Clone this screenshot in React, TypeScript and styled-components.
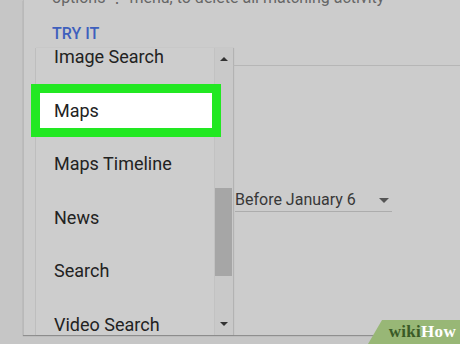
import { FunctionComponent } from "react"
import styled, { createGlobalStyle } from "styled-components"

const GlobalStyle = createGlobalStyle`
    html, body {
        margin: 0;
        padding: 0;
        overflow: hidden;
        background: #c6c6c6;
        font-family: Roboto, "Noto Sans", Arial, sans-serif;
    }
`

const Items = [
    'Image Search',
    'Maps',
    'Maps Timeline',
    'News',
    'Search',
    'Video Search',
]

const Page = styled.div`
    position: relative;
    display: flex;
    width: 460px;
    height: 344px;
    overflow: hidden;
    background: #c6c6c6;
`
const Gutter = styled.div`
    width: 23px;
    flex: none;
`
const Card = styled.div`
    flex: 1;
    height: 335px;
    display: flex;
    flex-direction: column;
    background: #cccccc;
    border-left: 1px solid #b9b9b9;
    box-shadow: 0 1px 1px rgba(0, 0, 0, 0.28);
`
const HintText = styled.div`
    margin-top: -12.5px;
    padding-left: 28px;
    font-size: 16px;
    line-height: 20px;
    color: #666;
    white-space: nowrap;
`
const TryIt = styled.div`
    margin-top: 16.5px;
    padding-left: 28px;
    font-size: 16px;
    line-height: 20px;
    font-weight: 500;
    color: #3e5fbd;
`
const Body = styled.div`
    flex: 1;
    display: flex;
    align-items: flex-start;
    margin-top: 4px;
    padding-left: 11px;
    min-height: 0;
`
const Menu = styled.div`
    width: 198px;
    height: 287px;
    flex: none;
    display: flex;
    background: #cdcdcd;
    border-left: 1px solid #bebebe;
    box-sizing: border-box;
    box-shadow: 1px 0 1px rgba(0, 0, 0, 0.12);
`
const List = styled.div`
    flex: 1;
    margin-top: -17.6px;
    display: flex;
    flex-direction: column;
`
const Item = styled.div<{ $highlighted?: boolean }>`
    position: relative;
    height: 53.5px;
    flex: none;
    display: flex;
    align-items: center;
    padding-left: 18px;
    font-size: 18px;
    line-height: 22px;
    color: #222;
    white-space: nowrap;

    &::before {
        content: '';
        display: ${({ $highlighted }) => ($highlighted ? 'block' : 'none')};
        position: absolute;
        top: 0;
        bottom: 0;
        left: -5px;
        right: -7px;
        background: #ffffff;
        border: 9px solid #22e822;
        z-index: 1;
    }
`
const ItemLabel = styled.span`
    position: relative;
    z-index: 2;
`
const Scrollbar = styled.div`
    width: 19px;
    height: 100%;
    flex: none;
    display: flex;
    flex-direction: column;
    background: #c9c9c9;
    border-left: 1px solid #c2c2c2;
    box-sizing: border-box;
`
const ArrowBox = styled.div<{ $grow?: boolean }>`
    height: 22px;
    flex: none;
    display: flex;
    align-items: center;
    justify-content: center;
    margin-top: ${({ $grow }) => ($grow ? 'auto' : '0')};
`
const Triangle = styled.div<{ $down?: boolean }>`
    width: 0;
    height: 0;
    border-left: 4px solid transparent;
    border-right: 4px solid transparent;
    ${({ $down }) => ($down ? 'border-top: 4px solid #333;' : 'border-bottom: 4px solid #333;')}
`
const Thumb = styled.div`
    margin-top: 118px;
    height: 88px;
    width: 17px;
    flex: none;
    background: #a6a6a6;
`
const RightPane = styled.div`
    flex: 1;
    margin-top: 17px;
    border-top: 1px solid #b6b6b6;
    padding-left: 2px;
`
const Select = styled.div`
    width: 157px;
    margin-top: 124px;
    display: flex;
    align-items: center;
    justify-content: space-between;
    padding-bottom: 1px;
    border-bottom: 1px solid #acacac;
    font-size: 16px;
    line-height: 20px;
    color: #383838;
`
const SelectArrow = styled.div`
    margin-right: 3px;
    width: 0;
    height: 0;
    border-left: 5px solid transparent;
    border-right: 5px solid transparent;
    border-top: 5px solid #555;
`
const Watermark = styled.div`
    position: absolute;
    right: 0;
    bottom: 0;
    width: 92px;
    height: 24px;
    display: flex;
    align-items: center;
    justify-content: flex-end;
    padding-right: 4px;
    box-sizing: border-box;
    background: #98b776;
    clip-path: polygon(14px 0, 100% 0, 100% 100%, 0 100%);
    font-family: "Liberation Serif", "DejaVu Serif", serif;
    font-weight: bold;
    font-size: 17px;
    letter-spacing: 0.3px;
`
const WikiPart = styled.span`
    color: #3a5a26;
`
const HowPart = styled.span`
    color: #ffffff;
`

export const App: FunctionComponent = () => {
    return (
        <Page>
            <GlobalStyle />
            <Gutter />
            <Card>
                <HintText>options ⋮ menu, to delete all matching activity</HintText>
                <TryIt>TRY IT</TryIt>
                <Body>
                    <Menu>
                        <List>
                            {Items.map((text, i) => (
                                <Item key={i} $highlighted={text === 'Maps'}>
                                    <ItemLabel>{text}</ItemLabel>
                                </Item>
                            ))}
                        </List>
                        <Scrollbar>
                            <ArrowBox><Triangle /></ArrowBox>
                            <Thumb />
                            <ArrowBox $grow><Triangle $down /></ArrowBox>
                        </Scrollbar>
                    </Menu>
                    <RightPane>
                        <Select>
                            <span>Before January 6</span>
                            <SelectArrow />
                        </Select>
                    </RightPane>
                </Body>
            </Card>
            <Watermark>
                <WikiPart>wiki</WikiPart>
                <HowPart>How</HowPart>
            </Watermark>
        </Page>
    )
}

export default App
